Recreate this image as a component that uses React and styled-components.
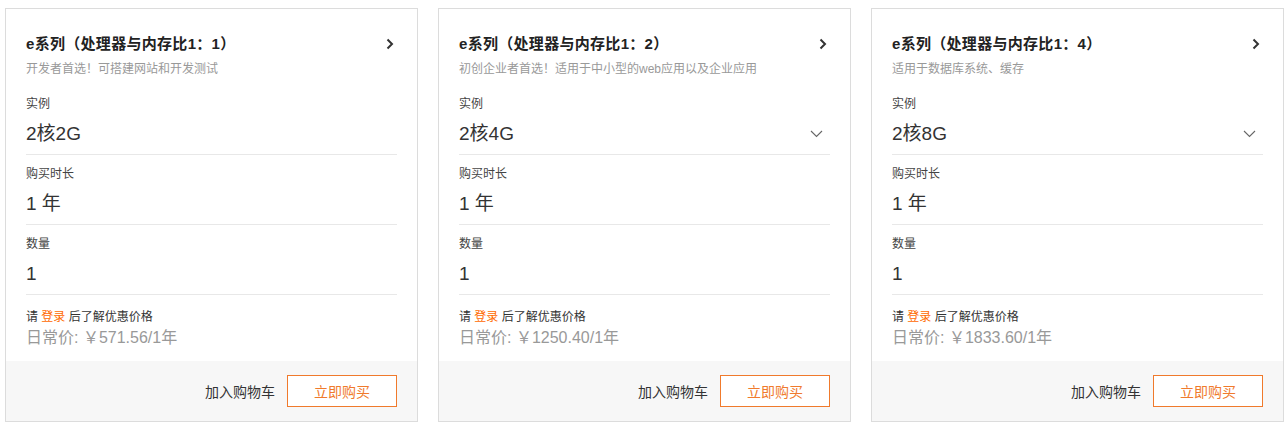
import React from "react";
import styled, { createGlobalStyle } from "styled-components";

const GlobalStyle = createGlobalStyle`
  body {
    margin: 0;
    background: #fff;
    font-family: "Liberation Sans", "Noto Sans CJK SC", sans-serif;
    color: #333;
  }
`;

const plans = [
  {
    title: "e系列（处理器与内存比1：1）",
    desc: "开发者首选！可搭建网站和开发测试",
    spec: "2核2G",
    select: false,
    price: "571.56",
  },
  {
    title: "e系列（处理器与内存比1：2）",
    desc: "初创企业者首选！适用于中小型的web应用以及企业应用",
    spec: "2核4G",
    select: true,
    price: "1250.40",
  },
  {
    title: "e系列（处理器与内存比1：4）",
    desc: "适用于数据库系统、缓存",
    spec: "2核8G",
    select: true,
    price: "1833.60",
  },
];

function ChevronRight() {
  return (
    <svg width="8" height="12" viewBox="0 0 8 12">
      <polyline points="1.5,1.5 6,6 1.5,10.5" fill="none" stroke="#333" strokeWidth="2" />
    </svg>
  );
}

function ChevronDown() {
  return (
    <svg width="13" height="8" viewBox="0 0 13 8">
      <polyline points="1,1 6.5,6.5 12,1" fill="none" stroke="#666" strokeWidth="1.1" />
    </svg>
  );
}

function Field({ label, value, select }) {
  return (
    <FieldRow>
      <Label>{label}</Label>
      <Value>
        <span>{value}</span>
        {select && <ChevronDown />}
      </Value>
    </FieldRow>
  );
}

function PlanCard({ plan }) {
  return (
    <Card>
      <Body>
        <TitleRow>
          <Title>{plan.title}</Title>
          <ChevronRight />
        </TitleRow>
        <Desc>{plan.desc}</Desc>
        <Fields>
          <Field label="实例" value={plan.spec} select={plan.select} />
          <Field label="购买时长" value="1 年" />
          <Field label="数量" value="1" />
        </Fields>
        <LoginTip>
          请 <a href="#login">登录</a> 后了解优惠价格
        </LoginTip>
        <Price>日常价: ￥{plan.price}/1年</Price>
      </Body>
      <Footer>
        <CartLink>加入购物车</CartLink>
        <BuyButton>立即购买</BuyButton>
      </Footer>
    </Card>
  );
}

export default function App() {
  return (
    <>
      <GlobalStyle />
      <Row>
        {plans.map((p) => (
          <PlanCard key={p.spec} plan={p} />
        ))}
      </Row>
    </>
  );
}

const Row = styled.div`
  display: flex;
  gap: 20px;
  padding: 8px 0 0 5px;
`;

const Card = styled.div`
  width: 413px;
  box-sizing: border-box;
  border: 1px solid #dcdcdc;
  background: #fff;
  display: flex;
  flex-direction: column;
`;

const Body = styled.div`
  padding: 24px 20px 12px;
`;

const TitleRow = styled.div`
  display: flex;
  align-items: center;
  justify-content: space-between;
  padding-right: 3px;
`;

const Title = styled.h3`
  margin: 0;
  font-size: 15px;
  line-height: 22px;
  font-weight: bold;
  color: #222;
  letter-spacing: 0.3px;
`;

const Desc = styled.div`
  margin-top: 5px;
  font-size: 12px;
  line-height: 18px;
  color: #999;
`;

const Fields = styled.div`
  margin-top: 7px;
`;

const FieldRow = styled.div`
  padding: 10px 0 6px;
  border-bottom: 1px solid #e8e8e8;
`;

const Label = styled.div`
  font-size: 12px;
  line-height: 18px;
  color: #444;
`;

const Value = styled.div`
  margin-top: 7px;
  display: flex;
  align-items: center;
  justify-content: space-between;
  padding-right: 7px;
  font-size: 19px;
  line-height: 28px;
  color: #333;
`;

const LoginTip = styled.div`
  margin-top: 13px;
  font-size: 12px;
  line-height: 18px;
  color: #333;

  a {
    color: #ff6a00;
    text-decoration: none;
  }
`;

const Price = styled.div`
  margin-top: 1px;
  font-size: 16px;
  line-height: 22px;
  color: #999;
`;

const Footer = styled.div`
  height: 60px;
  background: #f7f7f7;
  display: flex;
  align-items: center;
  justify-content: flex-end;
  gap: 12px;
  padding-right: 20px;
`;

const CartLink = styled.span`
  font-size: 14px;
  color: #333;
`;

const BuyButton = styled.button`
  width: 110px;
  height: 32px;
  border: 1px solid #f07a2c;
  background: #fff;
  color: #f07a2c;
  font-size: 14px;
  font-family: inherit;
  padding: 0;
  cursor: pointer;
`;
